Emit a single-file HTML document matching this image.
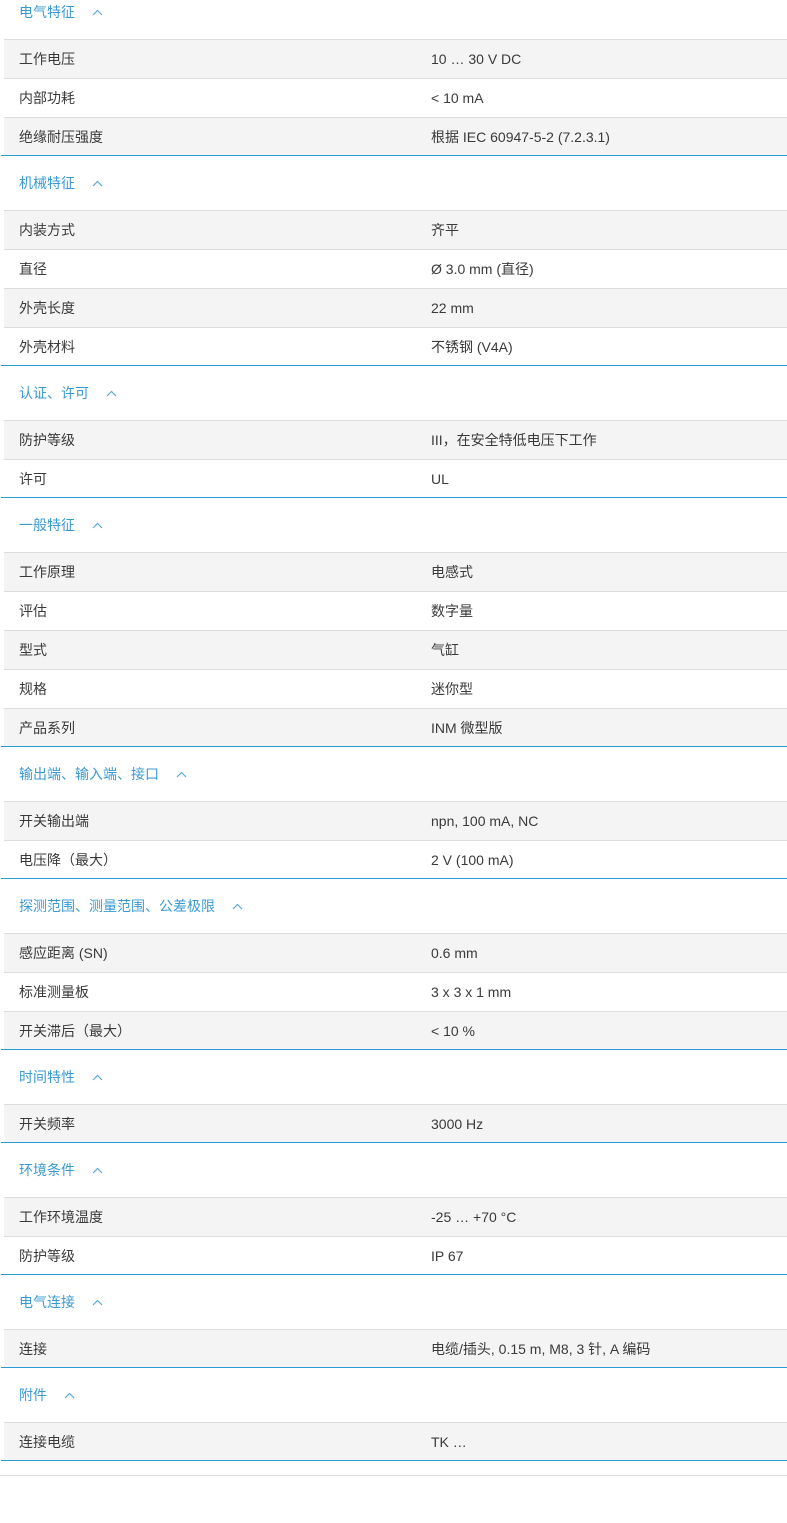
<!DOCTYPE html>
<html><head><meta charset="utf-8"><style>
*{margin:0;padding:0;box-sizing:border-box}
body{width:787px;height:1523px;background:#fff;font-family:"Liberation Sans","Noto Sans CJK SC",sans-serif;font-size:14px;color:#3a3a3a;overflow:hidden}
.sec{border-bottom:1px solid #2a9bd2;margin-left:1px}
.hd{height:54px;display:flex;align-items:center;padding-left:18px;color:#3a9ad0;font-size:14px}
.first .hd{height:39px;padding-bottom:15px}
.hd svg{margin-left:17px}
.row{height:39px;border-top:1px solid #ddd;display:flex;align-items:center;margin-left:3px;background:#fff}
.row:last-child{height:38px}
.row:nth-child(even){background:#f4f4f4}
.row .l{width:427px;padding-left:15px}
.end{position:absolute;left:0;top:1475px;width:787px;border-top:1px solid #ddd}
</style></head><body>
<div class="sec first"><div class="hd">电气特征<svg width="11" height="7" viewBox="0 0 11 7"><path d="M1 6L5.5 1.5L10 6" fill="none" stroke="#5aaad6" stroke-width="1.2"/></svg></div>
<div class="row"><span class="l">工作电压</span><span>10 … 30 V DC</span></div>
<div class="row"><span class="l">内部功耗</span><span>&lt; 10 mA</span></div>
<div class="row"><span class="l">绝缘耐压强度</span><span>根据 IEC 60947-5-2 (7.2.3.1)</span></div></div>
<div class="sec"><div class="hd">机械特征<svg width="11" height="7" viewBox="0 0 11 7"><path d="M1 6L5.5 1.5L10 6" fill="none" stroke="#5aaad6" stroke-width="1.2"/></svg></div>
<div class="row"><span class="l">内装方式</span><span>齐平</span></div>
<div class="row"><span class="l">直径</span><span>Ø 3.0 mm (直径)</span></div>
<div class="row"><span class="l">外壳长度</span><span>22 mm</span></div>
<div class="row"><span class="l">外壳材料</span><span>不锈钢 (V4A)</span></div></div>
<div class="sec"><div class="hd">认证、许可<svg width="11" height="7" viewBox="0 0 11 7"><path d="M1 6L5.5 1.5L10 6" fill="none" stroke="#5aaad6" stroke-width="1.2"/></svg></div>
<div class="row"><span class="l">防护等级</span><span>III，在安全特低电压下工作</span></div>
<div class="row"><span class="l">许可</span><span>UL</span></div></div>
<div class="sec"><div class="hd">一般特征<svg width="11" height="7" viewBox="0 0 11 7"><path d="M1 6L5.5 1.5L10 6" fill="none" stroke="#5aaad6" stroke-width="1.2"/></svg></div>
<div class="row"><span class="l">工作原理</span><span>电感式</span></div>
<div class="row"><span class="l">评估</span><span>数字量</span></div>
<div class="row"><span class="l">型式</span><span>气缸</span></div>
<div class="row"><span class="l">规格</span><span>迷你型</span></div>
<div class="row"><span class="l">产品系列</span><span>INM 微型版</span></div></div>
<div class="sec"><div class="hd">输出端、输入端、接口<svg width="11" height="7" viewBox="0 0 11 7"><path d="M1 6L5.5 1.5L10 6" fill="none" stroke="#5aaad6" stroke-width="1.2"/></svg></div>
<div class="row"><span class="l">开关输出端</span><span>npn, 100 mA, NC</span></div>
<div class="row"><span class="l">电压降（最大）</span><span>2 V (100 mA)</span></div></div>
<div class="sec"><div class="hd">探测范围、测量范围、公差极限<svg width="11" height="7" viewBox="0 0 11 7"><path d="M1 6L5.5 1.5L10 6" fill="none" stroke="#5aaad6" stroke-width="1.2"/></svg></div>
<div class="row"><span class="l">感应距离 (SN)</span><span>0.6 mm</span></div>
<div class="row"><span class="l">标准测量板</span><span>3 x 3 x 1 mm</span></div>
<div class="row"><span class="l">开关滞后（最大）</span><span>&lt; 10 %</span></div></div>
<div class="sec"><div class="hd">时间特性<svg width="11" height="7" viewBox="0 0 11 7"><path d="M1 6L5.5 1.5L10 6" fill="none" stroke="#5aaad6" stroke-width="1.2"/></svg></div>
<div class="row"><span class="l">开关频率</span><span>3000 Hz</span></div></div>
<div class="sec"><div class="hd">环境条件<svg width="11" height="7" viewBox="0 0 11 7"><path d="M1 6L5.5 1.5L10 6" fill="none" stroke="#5aaad6" stroke-width="1.2"/></svg></div>
<div class="row"><span class="l">工作环境温度</span><span>-25 … +70 °C</span></div>
<div class="row"><span class="l">防护等级</span><span>IP 67</span></div></div>
<div class="sec"><div class="hd">电气连接<svg width="11" height="7" viewBox="0 0 11 7"><path d="M1 6L5.5 1.5L10 6" fill="none" stroke="#5aaad6" stroke-width="1.2"/></svg></div>
<div class="row"><span class="l">连接</span><span>电缆/插头, 0.15 m, M8, 3 针, A 编码</span></div></div>
<div class="sec"><div class="hd">附件<svg width="11" height="7" viewBox="0 0 11 7"><path d="M1 6L5.5 1.5L10 6" fill="none" stroke="#5aaad6" stroke-width="1.2"/></svg></div>
<div class="row"><span class="l">连接电缆</span><span>TK …</span></div></div>
<div class="end"></div>
</body></html>
